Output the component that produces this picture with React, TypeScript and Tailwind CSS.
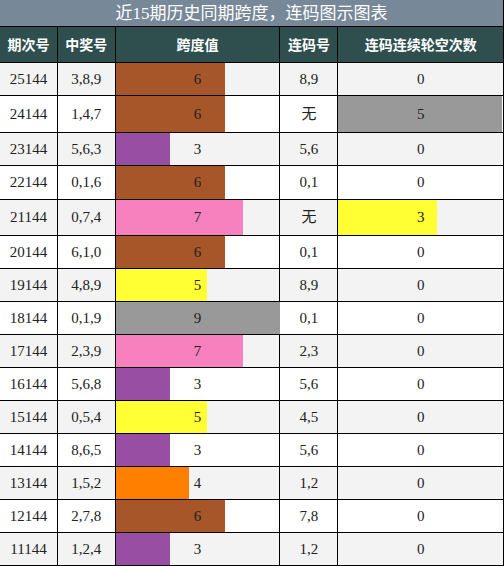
import React from 'react';

interface Row {
  issue: string;
  nums: string;
  span: number;
  spanColor: string;
  pair: string;
  miss: number;
  missColor?: string;
  h: string;
}

const rows: Row[] = [
  { issue: '25144', nums: '3,8,9', span: 6, spanColor: 'bg-[#a65628]', pair: '8,9', miss: 0, h: 'h-[33px]' },
  { issue: '24144', nums: '1,4,7', span: 6, spanColor: 'bg-[#a65628]', pair: '无', miss: 5, missColor: 'bg-[#999999]', h: 'h-[37px]' },
  { issue: '23144', nums: '5,6,3', span: 3, spanColor: 'bg-[#984ea3]', pair: '5,6', miss: 0, h: 'h-[33px]' },
  { issue: '22144', nums: '0,1,6', span: 6, spanColor: 'bg-[#a65628]', pair: '0,1', miss: 0, h: 'h-[34px]' },
  { issue: '21144', nums: '0,7,4', span: 7, spanColor: 'bg-[#f781bf]', pair: '无', miss: 3, missColor: 'bg-[#ffff33]', h: 'h-[36px]' },
  { issue: '20144', nums: '6,1,0', span: 6, spanColor: 'bg-[#a65628]', pair: '0,1', miss: 0, h: 'h-[33px]' },
  { issue: '19144', nums: '4,8,9', span: 5, spanColor: 'bg-[#ffff33]', pair: '8,9', miss: 0, h: 'h-[33px]' },
  { issue: '18144', nums: '0,1,9', span: 9, spanColor: 'bg-[#999999]', pair: '0,1', miss: 0, h: 'h-[33px]' },
  { issue: '17144', nums: '2,3,9', span: 7, spanColor: 'bg-[#f781bf]', pair: '2,3', miss: 0, h: 'h-[33px]' },
  { issue: '16144', nums: '5,6,8', span: 3, spanColor: 'bg-[#984ea3]', pair: '5,6', miss: 0, h: 'h-[33px]' },
  { issue: '15144', nums: '0,5,4', span: 5, spanColor: 'bg-[#ffff33]', pair: '4,5', miss: 0, h: 'h-[33px]' },
  { issue: '14144', nums: '8,6,5', span: 3, spanColor: 'bg-[#984ea3]', pair: '5,6', miss: 0, h: 'h-[33px]' },
  { issue: '13144', nums: '1,5,2', span: 4, spanColor: 'bg-[#ff7f00]', pair: '1,2', miss: 0, h: 'h-[33px]' },
  { issue: '12144', nums: '2,7,8', span: 6, spanColor: 'bg-[#a65628]', pair: '7,8', miss: 0, h: 'h-[33px]' },
  { issue: '11144', nums: '1,2,4', span: 3, spanColor: 'bg-[#984ea3]', pair: '1,2', miss: 0, h: 'h-[33px]' },
];

const serif = "font-['Liberation_Serif','Noto_Sans_CJK_SC',serif]";
const sans = "font-['Noto_Sans_CJK_SC','Noto_Sans',sans-serif]";

const BarCell: React.FC<{ value: number; max: number; color?: string; last?: boolean }> = ({ value, max, color, last }) => (
  <div className={`relative w-[165px] h-full ${last ? '' : 'border-r border-black'} flex items-center justify-center`}>
    {color && value > 0 && (
      <div className={`absolute left-0 top-0 h-full ${color}`} style={{ width: `${(value / max) * 164}px` }} />
    )}
    <span className="relative">{value}</span>
  </div>
);

const App: React.FC = () => {
  return (
    <div className={`w-[504px] h-[566px] border-r border-black box-border overflow-hidden ${serif} text-[#222]`}>
      <div className="h-[27px] bg-[#778899] border-b border-black flex items-center justify-center text-white text-[17px] leading-none">
        近15期历史同期跨度，连码图示图表
      </div>
      <div className={`h-[36px] bg-[#2f4f4f] border-b border-black flex text-white text-[14px] font-bold ${sans}`}>
        <div className="w-[58px] border-r border-black flex items-center justify-center">期次号</div>
        <div className="w-[58px] border-r border-black flex items-center justify-center">中奖号</div>
        <div className="w-[165px] border-r border-black flex items-center justify-center">跨度值</div>
        <div className="w-[58px] border-r border-black flex items-center justify-center">连码号</div>
        <div className="w-[165px] flex items-center justify-center">连码连续轮空次数</div>
      </div>
      {rows.map((r, i) => (
        <div
          key={r.issue}
          className={`${r.h} flex border-b border-black text-[15px] ${i % 2 === 0 ? 'bg-[#f3f3f3]' : 'bg-white'}`}
        >
          <div className="w-[58px] border-r border-black flex items-center justify-center">{r.issue}</div>
          <div className="w-[58px] border-r border-black flex items-center justify-center">{r.nums}</div>
          <BarCell value={r.span} max={9} color={r.spanColor} />
          <div className="w-[58px] border-r border-black flex items-center justify-center">{r.pair}</div>
          <BarCell value={r.miss} max={5} color={r.missColor} last />
        </div>
      ))}
    </div>
  );
};

export default App;
